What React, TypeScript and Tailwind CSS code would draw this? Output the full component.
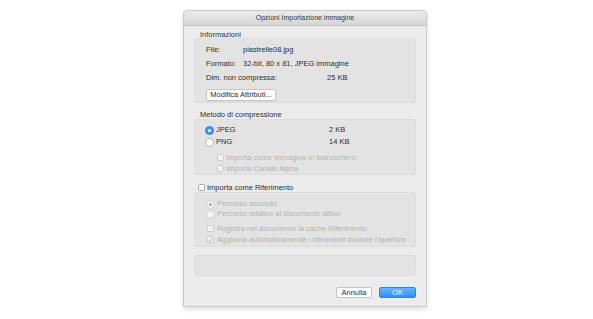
import React from "react";

const font = { fontFamily: '"Liberation Sans", Arial, sans-serif' };

function Radio({ checked, disabled }: { checked?: boolean; disabled?: boolean }) {
  if (checked && !disabled) {
    return (
      <span className="flex h-[9px] w-[9px] items-center justify-center rounded-full bg-[#3a95f6] border border-[#2f86e8]">
        <span className="h-[3px] w-[3px] rounded-full bg-white" />
      </span>
    );
  }
  if (checked && disabled) {
    return (
      <span className="flex h-[9px] w-[9px] items-center justify-center rounded-full bg-[#f4f4f4] border border-[#cfcfcf]">
        <span className="h-[3px] w-[3px] rounded-full bg-[#a8a8a8]" />
      </span>
    );
  }
  return (
    <span
      className={
        "h-[9px] w-[9px] rounded-full border " +
        (disabled ? "bg-[#f4f4f4] border-[#d2d2d2]" : "bg-white border-[#b5b5b5]")
      }
    />
  );
}

function Check({ checked, disabled }: { checked?: boolean; disabled?: boolean }) {
  return (
    <span
      className={
        "flex h-[7px] w-[7px] items-center justify-center rounded-[1.5px] border " +
        (disabled ? "bg-[#f3f3f3] border-[#cdcdcd]" : "bg-white border-[#a9a9a9]")
      }
    >
      {checked && (
        <svg width="6" height="6" viewBox="0 0 6 6">
          <path d="M1 3.2 L2.3 4.6 L5 1" fill="none" stroke="#9a9a9a" strokeWidth="0.9" />
        </svg>
      )}
    </span>
  );
}

export default function App() {
  return (
    <div className="h-[319px] w-[593px] bg-white pl-[183px] pt-[10px]" style={font}>
      <div className="flex h-[297px] w-[244px] flex-col rounded-t-[4px] border border-[#cbcbcb] bg-[#ececec] shadow-[0_2px_5px_rgba(0,0,0,0.14)]">
        {/* title bar */}
        <div className="flex h-[15px] shrink-0 items-center justify-center rounded-t-[4px] border-b border-[#c4c4c4] bg-gradient-to-b from-[#ebebeb] to-[#d6d6d6] text-[7px] text-[#3a3a3a]">
          Opzioni Importazione immagine
        </div>

        <div className="flex flex-1 flex-col px-[10px] text-[7.5px] text-[#2e2e2e]">
          {/* Informazioni */}
          <div className="flex h-[12px] items-end pl-[6px] leading-[7px]">Informazioni</div>
          <div className="flex h-[65px] flex-col rounded-[3px] border border-[#dddddd] bg-[#e3e3e3] pl-[11px] pt-[4px]">
            <div className="flex h-[14px] items-center">
              <span className="w-[37px]">File:</span>
              <span>piastrelle08.jpg</span>
            </div>
            <div className="flex h-[14px] items-center">
              <span className="w-[37px]">Formato:</span>
              <span>32-bit, 80 x 81, JPEG immagine</span>
            </div>
            <div className="flex h-[13px] items-center">
              <span className="w-[121px]">Dim. non compressa:</span>
              <span>25 KB</span>
            </div>
            <div className="mt-[5px] flex">
              <span className="flex h-[12px] w-[70px] items-center justify-center rounded-[2px] border border-[#c6c6c6] bg-white text-[7.5px] text-[#2e2e2e] shadow-[0_0.5px_0.5px_rgba(0,0,0,0.08)]">
                Modifica Attributi...
              </span>
            </div>
          </div>

          {/* Metodo di compressione */}
          <div className="flex h-[16px] items-end pl-[6px] leading-[8px]">Metodo di compressione</div>
          <div className="flex h-[56px] flex-col rounded-[3px] border border-[#dddddd] bg-[#e3e3e3] pl-[10px] pt-[4px]">
            <div className="flex h-[12px] items-center">
              <Radio checked />
              <span className="ml-[2px] w-[113px]">JPEG</span>
              <span>2 KB</span>
            </div>
            <div className="flex h-[12px] items-center">
              <Radio />
              <span className="ml-[2px] w-[113px]">PNG</span>
              <span>14 KB</span>
            </div>
            <div className="mt-[4px] flex h-[11px] items-center pl-[12px] text-[#b3b3b3]">
              <Check disabled />
              <span className="ml-[2px]">Importa come immagine in bianco/nero</span>
            </div>
            <div className="flex h-[11px] items-center pl-[12px] text-[#b3b3b3]">
              <Check disabled />
              <span className="ml-[2px]">Importa Canale Alpha</span>
            </div>
          </div>

          {/* Importa come Riferimento */}
          <div className="mt-[8px] flex h-[9px] items-center pl-[4px]">
            <Check />
            <span className="ml-[2px]">Importa come Riferimento</span>
          </div>
          <div className="flex h-[55px] flex-col rounded-[3px] border border-[#dddddd] bg-[#e3e3e3] pl-[11px] pt-[6px] text-[#b3b3b3]">
            <div className="flex h-[10px] items-center">
              <Radio checked disabled />
              <span className="ml-[2px]">Percorso assoluto</span>
            </div>
            <div className="flex h-[10px] items-center">
              <Radio disabled />
              <span className="ml-[2px]">Percorso relativo al documento attivo</span>
            </div>
            <div className="mt-[4px] flex h-[11px] items-center pl-[1px]">
              <Check disabled />
              <span className="ml-[3px]">Registra nel documento la cache Riferimento</span>
            </div>
            <div className="flex h-[11px] items-center pl-[1px]">
              <Check checked disabled />
              <span className="ml-[3px]">Aggiorna automaticamente i riferimenti durante l'apertura</span>
            </div>
          </div>

          <div className="mt-[8px] h-[21px] rounded-[3px] border border-[#dddddd] bg-[#e3e3e3]" />

          <div className="mt-[11px] flex justify-end gap-[7px]">
            <span className="flex h-[11px] w-[36px] items-center justify-center rounded-[2px] border border-[#c6c6c6] bg-white text-[7.5px] text-[#2e2e2e]">
              Annulla
            </span>
            <span className="flex h-[11px] w-[37px] items-center justify-center rounded-[2px] border border-[#2a86ef] bg-gradient-to-b from-[#6ab3fc] to-[#2f8cf7] text-[7.5px] text-white">
              OK
            </span>
          </div>
        </div>
      </div>
    </div>
  );
}
